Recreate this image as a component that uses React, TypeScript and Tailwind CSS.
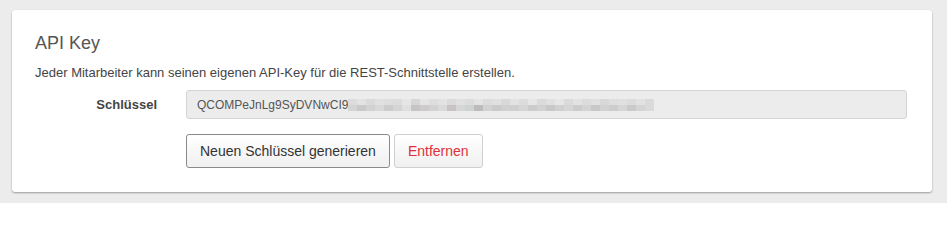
import React from 'react'

// blurred tail of the key, two rows of mosaic blocks
const topRow = ['#dcdcdc', '#e2e2e2', '#dadada', '#e0e0e0', '#dedede', '#dcdcdc', '#e6e6e6', '#d6d6d6', '#e4e4e4', '#dedede', '#e2e2e2', '#dadada', '#e0e0e0', '#dcdcdc', '#e4e4e4', '#dcdcdc', '#e0e0e0', '#d8d8d8', '#e2e2e2', '#dcdcdc', '#e6e6e6', '#dadada', '#e0e0e0', '#e6e6e6', '#dadada', '#e2e2e2', '#dcdcdc', '#e0e0e0', '#d8d8d8', '#dedede', '#e0e0e0', '#dcdcdc', '#e2e2e2', '#dadada']
const bottomRow = ['#d4d4d4', '#cbc8c8', '#d2d2d2', '#d8d8d8', '#cccccc', '#d4d4d4', '#e0e0e0', '#c6c4c4', '#cdcbcb', '#d2d2d2', '#dadada', '#c8c4c4', '#d6d6d6', '#cfd3cf', '#bdbbbb', '#d2d2d2', '#cacaca', '#d0d0d0', '#cfcfcf', '#d6d6d6', '#cccccc', '#d2d2d2', '#c8c8c8', '#d0d0d0', '#d6d6d6', '#cccccc', '#d4d4d4', '#c9c7c7', '#d2d2d2', '#cdcdcd', '#d6d6d6', '#cacaca', '#d4d4d4', '#dadada']

const App = () => {
  return (
    <div className="w-[947px] h-[203px] bg-[#ececec] pt-[10px] pl-[12px] font-['Liberation_Sans',Arial,sans-serif]">
      <div className="w-[920px] h-[182px] bg-white rounded-[3px] shadow-[0_1px_2px_rgba(0,0,0,0.35)] pl-[23px] pr-[25px] pt-[21px]">
        <h2 className="text-[18px] leading-[24px] text-[#555555]">API Key</h2>
        <p className="mt-[10px] text-[13px] leading-[16px] text-[#444444]">
          Jeder Mitarbeiter kann seinen eigenen API-Key für die REST-Schnittstelle erstellen.
        </p>
        <div className="mt-[9px] flex items-center">
          <label className="w-[122px] text-right text-[13px] font-bold text-[#444444]">Schlüssel</label>
          <div className="ml-[29px] flex-1 h-[29px] bg-[#ececec] border border-[#d4d4d4] rounded-[3px] flex items-center pl-[10px] text-[12px] text-[#555555]">
            <span>QCOMPeJnLg9SyDVNwCI9</span>
            <div className="flex flex-col">
              <div className="flex">
                {topRow.map((c, i) => (
                  <span key={i} className="w-[9px] h-[6px]" style={{ backgroundColor: c }} />
                ))}
              </div>
              <div className="flex">
                {bottomRow.map((c, i) => (
                  <span key={i} className="w-[9px] h-[6px]" style={{ backgroundColor: c }} />
                ))}
              </div>
            </div>
          </div>
        </div>
        <div className="mt-[15px] ml-[151px] flex gap-[4px]">
          <button className="h-[34px] px-[13px] border border-[#8a8a8a] rounded-[3px] bg-gradient-to-b from-white to-[#f0f0f0] text-[14px] text-[#333333]">
            Neuen Schlüssel generieren
          </button>
          <button className="h-[34px] px-[13px] border border-[#d0d0d0] rounded-[3px] bg-gradient-to-b from-white to-[#f0f0f0] text-[14px] text-[#e0313b]">
            Entfernen
          </button>
        </div>
      </div>
    </div>
  )
}

export default App
